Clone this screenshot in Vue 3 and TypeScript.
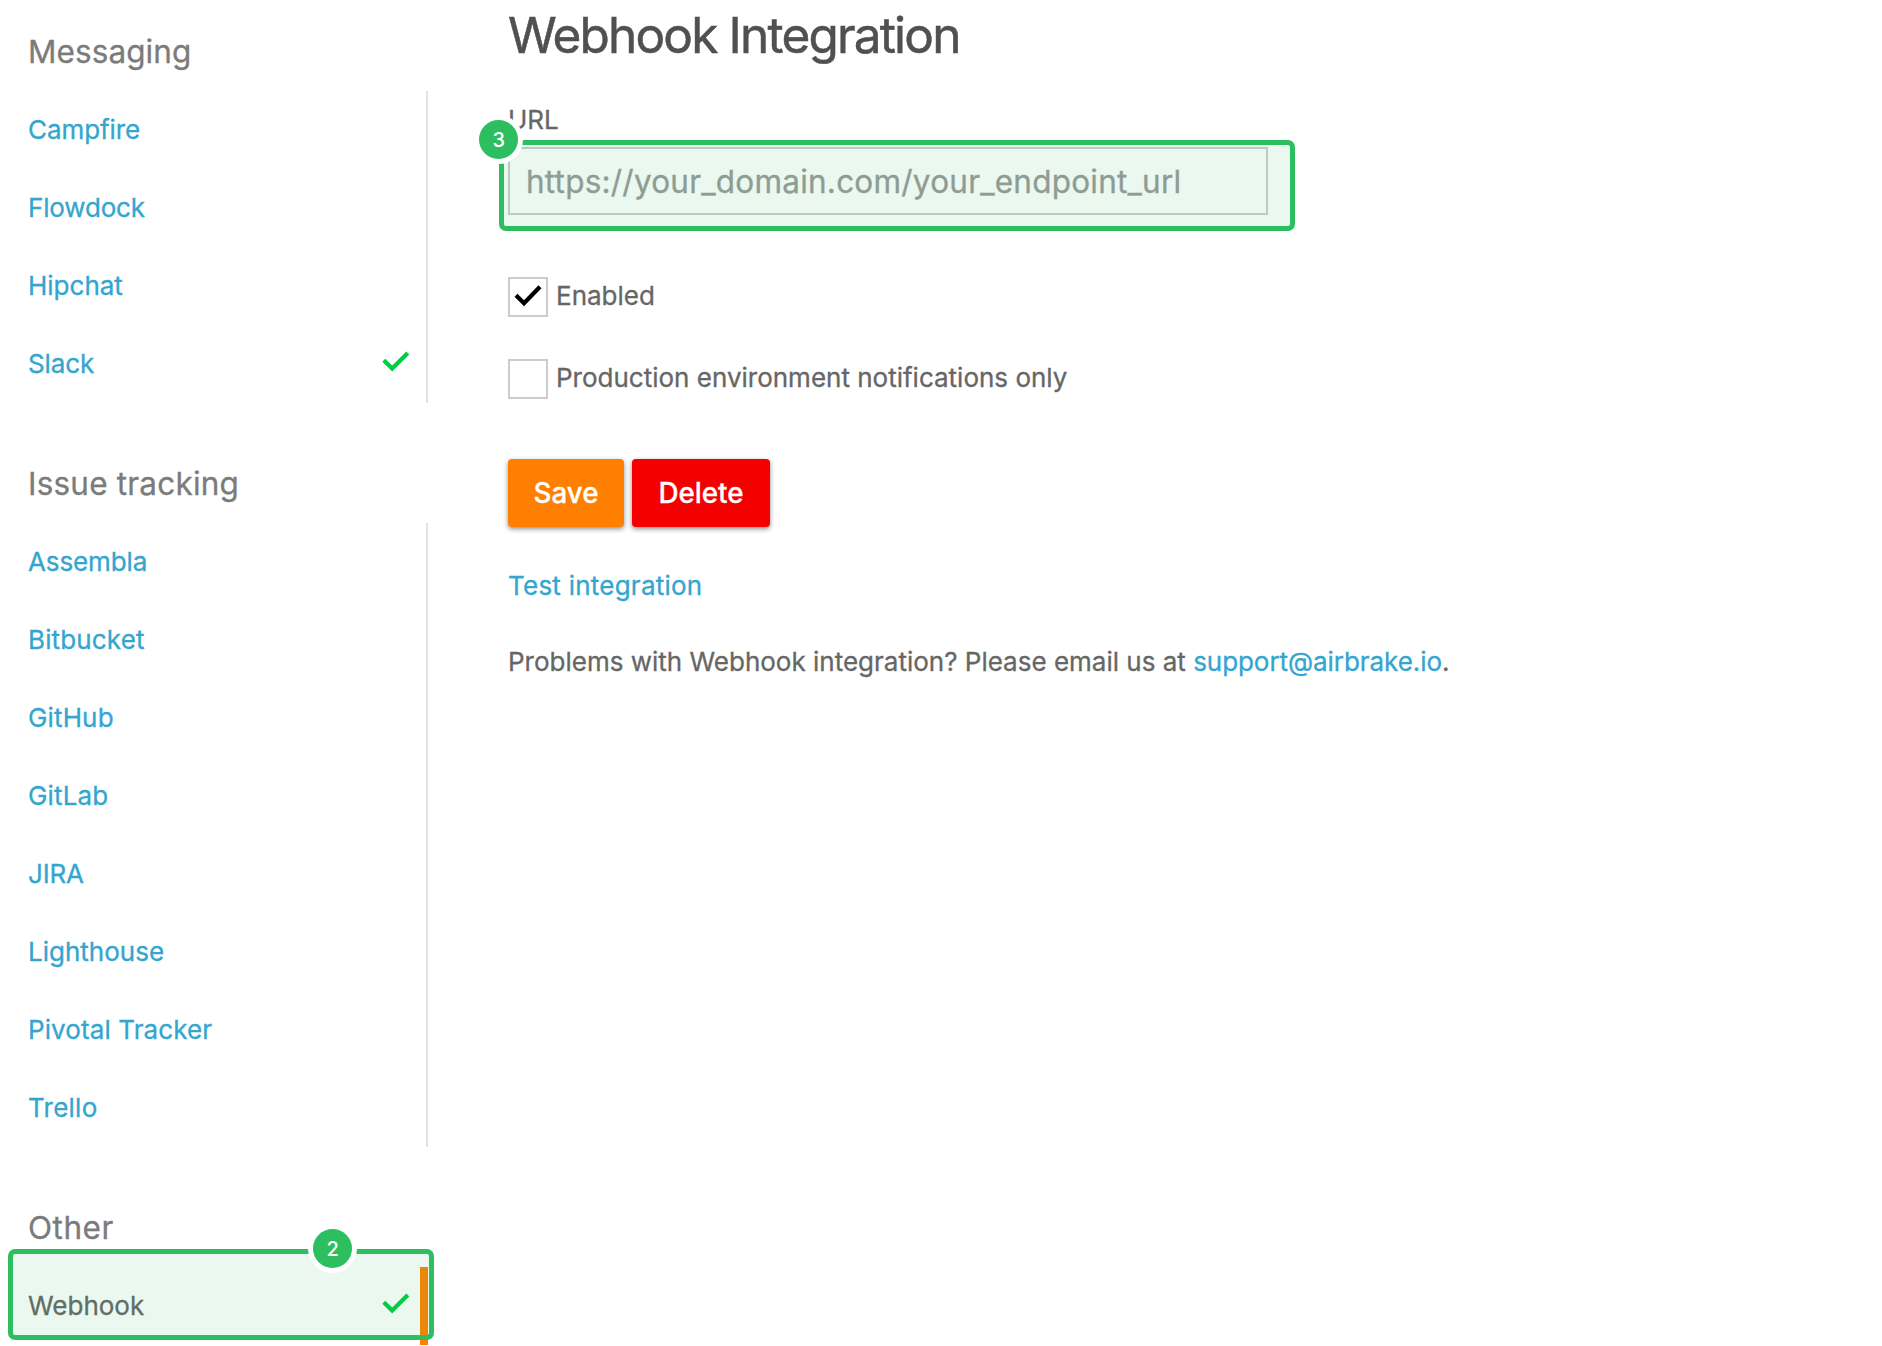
<script setup lang="ts">
interface Item { name: string; spacing: number; enabled?: boolean; active?: boolean }
interface Group { title: string; spacing: number; items: Item[] }

const groups: Group[] = [
  {
    title: 'Messaging', spacing: 0.08,
    items: [
      { name: 'Campfire', spacing: -0.07 },
      { name: 'Flowdock', spacing: -0.17 },
      { name: 'Hipchat', spacing: 0 },
      { name: 'Slack', spacing: -0.1, enabled: true },
    ],
  },
  {
    title: 'Issue tracking', spacing: 0.2,
    items: [
      { name: 'Assembla', spacing: -0.13 },
      { name: 'Bitbucket', spacing: 0.14 },
      { name: 'GitHub', spacing: 0.15 },
      { name: 'GitLab', spacing: 0.15 },
      { name: 'JIRA', spacing: -0.2 },
      { name: 'Lighthouse', spacing: 0 },
      { name: 'Pivotal Tracker', spacing: 0.1 },
      { name: 'Trello', spacing: 0.25 },
    ],
  },
  {
    title: 'Other', spacing: 0.5,
    items: [{ name: 'Webhook', spacing: 0, enabled: true, active: true }],
  },
]
</script>

<template>
  <div class="page">
    <nav class="sidebar">
      <section v-for="g in groups" :key="g.title">
        <h2><span :style="{ letterSpacing: g.spacing + 'px' }">{{ g.title }}</span></h2>
        <ul>
          <li v-for="i in g.items" :key="i.name" :class="{ active: i.active }">
            <a :style="{ letterSpacing: i.spacing + 'px' }">{{ i.name }}</a>
            <svg v-if="i.enabled" class="tick" width="28" height="22" viewBox="0 0 28 22">
              <path d="M1.8 9.2L10.2 17.6L25.8 2" fill="none" stroke="#00cc44" stroke-width="4.2" />
            </svg>
            <div v-if="i.active" class="highlight"><b class="badge">2</b></div>
          </li>
        </ul>
      </section>
    </nav>
    <main>
      <h1><span>Webhook Integration</span></h1>
      <label class="url"><span>URL</span></label>
      <div class="field">
        <div class="input"><span>https://your_domain.com/your_endpoint_url</span></div>
        <div class="highlight"><b class="badge">3</b></div>
      </div>
      <div class="option">
        <i class="box">
          <svg width="36" height="36" viewBox="0 0 36 36">
            <path d="M6 16.2L14 24.2L30 7.7" fill="none" stroke="#000" stroke-width="4.2" />
          </svg>
        </i>
        <span class="enabled">Enabled</span>
      </div>
      <div class="option">
        <i class="box"></i>
        <span class="prod">Production environment notifications only</span>
      </div>
      <div class="buttons">
        <button class="save"><span>Save</span></button>
        <button class="delete"><span>Delete</span></button>
      </div>
      <p class="test"><a>Test integration</a></p>
      <p class="help"><span>Problems with Webhook integration? Please email us at </span><a>support@airbrake.io</a>.</p>
    </main>
  </div>
</template>

<style>
body { background: #fff; overflow: hidden; }
</style>

<style scoped>
.page { display: flex; width: 1882px; height: 1346px; overflow: hidden; font-family: Inter, "Liberation Sans", sans-serif; font-size: 26px; color: #666; -webkit-text-stroke: 0.3px currentColor; }
.sidebar { width: 428px; flex: none; margin-top: -29px; }
h2 { margin: 0; height: 120px; box-sizing: border-box; padding: 61px 0 0 28px; font-size: 31.5px; line-height: 40px; font-weight: 400; color: #7b7b7b; white-space: nowrap; }
ul { list-style: none; margin: 0; padding: 0; }
li { position: relative; display: flex; align-items: center; justify-content: space-between; height: 78px; box-sizing: border-box; padding: 0 16px 0 28px; border-right: 2px solid #e2e2e2; }
li.active { border-right: 8px solid #ff8000; padding-right: 10px; }
li.active a { color: #666; }
li a { margin-top: -2px; }
.tick { margin-top: -5px; }
a { color: #34a5cf; white-space: nowrap; }
.highlight { position: absolute; box-sizing: border-box; border: 5px solid #2dbe60; border-radius: 7px; background: rgba(45, 190, 96, 0.1); }
li .highlight { left: 8px; top: -18px; width: 426px; height: 91px; }
.badge { position: absolute; width: 39px; height: 39px; border-radius: 50%; background: #2dbe60; box-shadow: 0 0 0 5px #fff; color: #fff; font-size: 20px; font-weight: 500; line-height: 40px; text-align: center; -webkit-text-stroke: 0; }
li .badge { left: 300.2px; top: -24.7px; }
.field .badge { left: -24.7px; top: -24.7px; }
main { flex: none; width: 1000px; padding-left: 80px; }
h1 { margin: 0; height: 72px; line-height: 70px; font-size: 49.5px; font-weight: 400; letter-spacing: -1.82px; color: #505050; white-space: nowrap; -webkit-text-stroke: 0.5px currentColor; }
.url { display: block; height: 75px; line-height: 95px; }
.field { position: relative; height: 68px; }
.input { box-sizing: border-box; width: 760px; height: 68px; border: 2px solid #ccc; padding-left: 16px; font-size: 31.5px; letter-spacing: 0.22px; line-height: 66px; color: #999; white-space: nowrap; }
.field .highlight { left: -9px; top: -7px; width: 796px; height: 91px; }
.option { display: flex; height: 40px; margin-top: 62px; line-height: 38px; white-space: nowrap; }
.option + .option { margin-top: 42px; }
.box { flex: none; width: 36px; height: 36px; border: 2px solid #ccc; margin-right: 8px; }
.box svg { display: block; }
.buttons { display: flex; gap: 8px; margin-top: 60px; height: 68px; }
button { padding: 0; border: 0; border-radius: 4px; box-shadow: 0 2px 5px rgba(0, 0, 0, 0.45); color: #fff; font: 500 27.8px Inter, sans-serif; white-space: nowrap; }
.save { width: 116px; background: #ff8000; }
.delete { width: 138px; background: #f50000; }
p { margin: 0; white-space: pre; }
.test { height: 78px; line-height: 118px; letter-spacing: 0.24px; }
.help { line-height: 114px; }
.help a { letter-spacing: -0.06px; }
</style>
